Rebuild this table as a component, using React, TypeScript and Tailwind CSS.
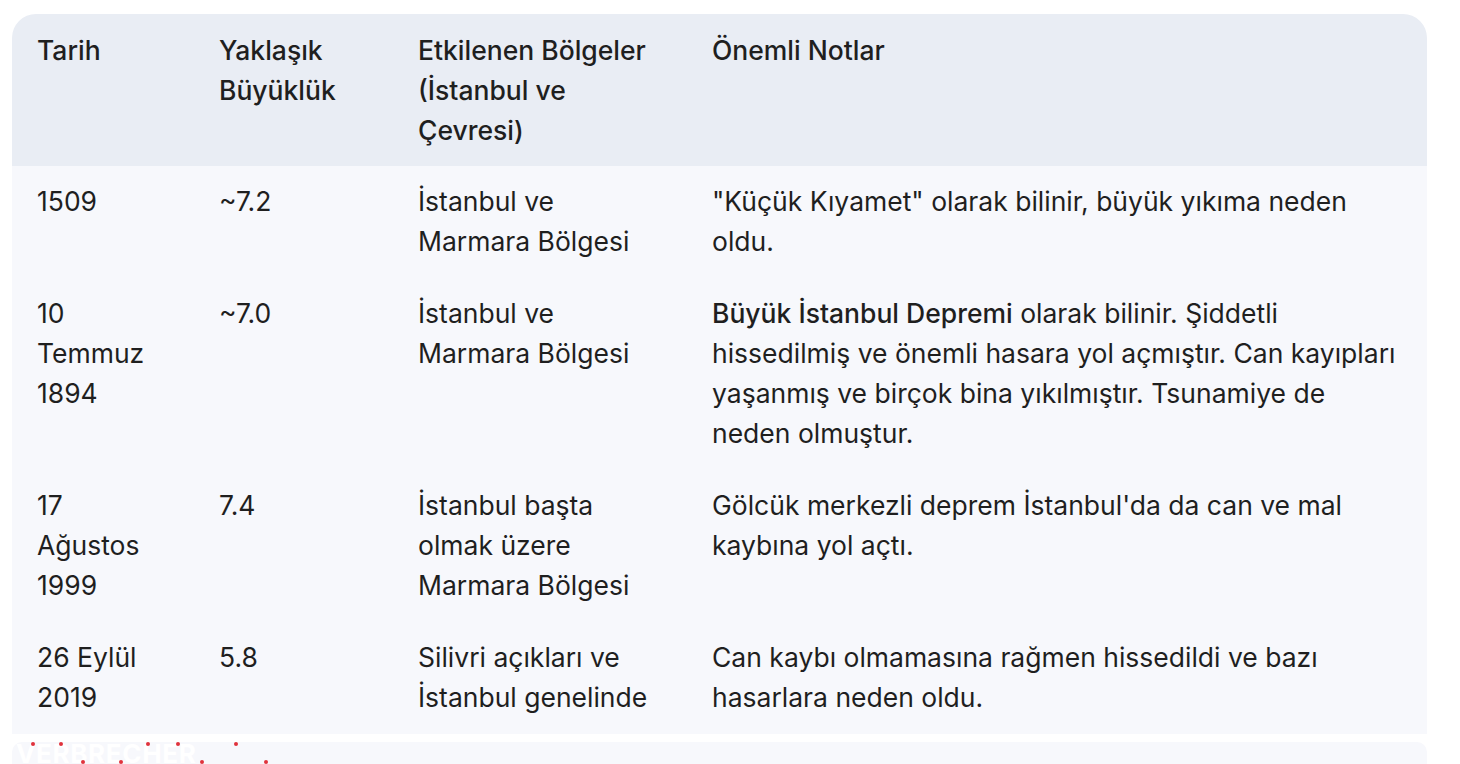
import React from "react";

type Row = { d: string[]; m: string; r: string[]; n: React.ReactNode[] };

const rows: Row[] = [
  {
    d: ["1509"],
    m: "~7.2",
    r: ["İstanbul ve", "Marmara Bölgesi"],
    n: ["\"Küçük Kıyamet\" olarak bilinir, büyük yıkıma neden", "oldu."],
  },
  {
    d: ["10", "Temmuz", "1894"],
    m: "~7.0",
    r: ["İstanbul ve", "Marmara Bölgesi"],
    n: [
      <>
        <span className="font-medium">Büyük İstanbul Depremi</span> olarak bilinir. Şiddetli
      </>,
      "hissedilmiş ve önemli hasara yol açmıştır. Can kayıpları",
      "yaşanmış ve birçok bina yıkılmıştır. Tsunamiye de",
      "neden olmuştur.",
    ],
  },
  {
    d: ["17", "Ağustos", "1999"],
    m: "7.4",
    r: ["İstanbul başta", "olmak üzere", "Marmara Bölgesi"],
    n: ["Gölcük merkezli deprem İstanbul'da da can ve mal", "kaybına yol açtı."],
  },
  {
    d: ["26 Eylül", "2019"],
    m: "5.8",
    r: ["Silivri açıkları ve", "İstanbul genelinde"],
    n: ["Can kaybı olmamasına rağmen hissedildi ve bazı", "hasarlara neden oldu."],
  },
];

const cols = "grid grid-cols-[183px_199px_294px_1fr]";

function Lines({ items }: { items: React.ReactNode[] }) {
  return (
    <>
      {items.map((t, i) => (
        <div key={i} className="whitespace-nowrap">
          {t}
        </div>
      ))}
    </>
  );
}

export default function App() {
  return (
    <div
      className="w-[1460px] h-[764px] overflow-hidden bg-white text-[#1f1f1f]"
      style={{ fontFamily: "Inter, 'Noto Sans', sans-serif" }}
    >
      <div className="ml-[12px] mt-[14px] w-[1415px]">
        <div className={`${cols} bg-[#e9edf4] rounded-t-[24px] text-[26.5px] leading-[40px] font-medium`}>
          <div className="px-[25px] py-4">Tarih</div>
          <div className="px-[24px] py-4">
            <Lines items={["Yaklaşık", "Büyüklük"]} />
          </div>
          <div className="px-[24px] py-4">
            <Lines items={["Etkilenen Bölgeler", "(İstanbul ve", "Çevresi)"]} />
          </div>
          <div className="px-[24px] py-4">Önemli Notlar</div>
        </div>
        <div className="bg-[#f7f8fc] text-[26.5px] leading-[40px]">
          {rows.map((r, i) => (
            <div key={i} className={cols}>
              <div className="px-[25px] pt-[15px] pb-[17px]">
                <Lines items={r.d} />
              </div>
              <div className="px-[24px] pt-[15px] pb-[17px]">{r.m}</div>
              <div className="px-[24px] pt-[15px] pb-[17px]">
                <Lines items={r.r} />
              </div>
              <div className="px-[24px] pt-[15px] pb-[17px]">
                <Lines items={r.n} />
              </div>
            </div>
          ))}
        </div>
        <div className="relative mt-[8px] h-[40px] rounded-t-[10px] bg-[#f7f8fc]">
          <div className="pl-[4px] text-[26px] leading-[24px] font-bold text-white tracking-wide">VERBRECHER</div>
          <span className="absolute left-[19px] top-[0px] h-[4px] w-[4px] rounded-full bg-[#e0323c]" />
          <span className="absolute left-[47px] top-[0px] h-[4px] w-[4px] rounded-full bg-[#e0323c]" />
          <span className="absolute left-[69px] top-[18px] h-[4px] w-[4px] rounded-full bg-[#e0323c]" />
          <span className="absolute left-[107px] top-[18px] h-[4px] w-[4px] rounded-full bg-[#e0323c]" />
          <span className="absolute left-[134px] top-[0px] h-[4px] w-[4px] rounded-full bg-[#e0323c]" />
          <span className="absolute left-[164px] top-[0px] h-[4px] w-[4px] rounded-full bg-[#e0323c]" />
          <span className="absolute left-[188px] top-[18px] h-[4px] w-[4px] rounded-full bg-[#e0323c]" />
          <span className="absolute left-[222px] top-[0px] h-[4px] w-[4px] rounded-full bg-[#e0323c]" />
          <span className="absolute left-[252px] top-[18px] h-[4px] w-[4px] rounded-full bg-[#e0323c]" />
        </div>
      </div>
    </div>
  );
}
